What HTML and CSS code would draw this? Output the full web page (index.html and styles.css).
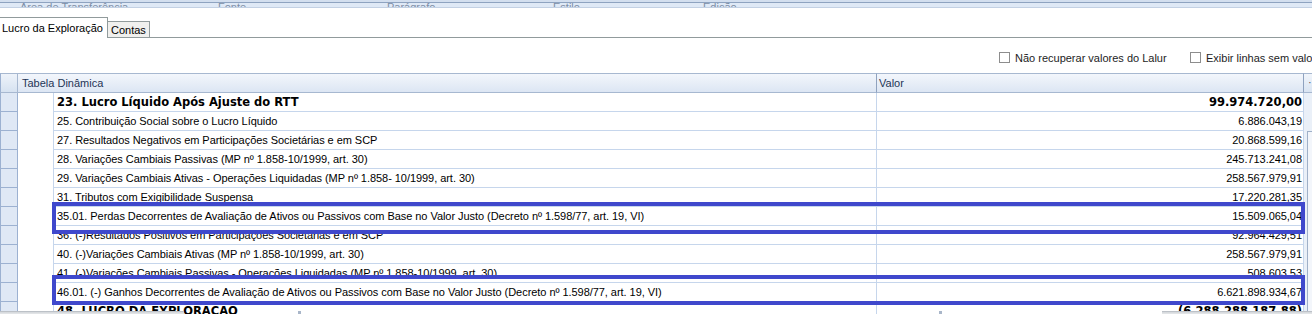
FILE: index.html
```html
<!DOCTYPE html>
<html lang="pt-BR">
<head>
<meta charset="utf-8">
<title>Lucro da Exploração</title>
<link rel="stylesheet" href="styles.css">
</head>
<body>
<div class="page">
  <div class="ribbon">
    <div class="ribbon-top"></div>
    <div class="ribbon-labels">
      <span class="rl rl1">Área de Transferência</span>
      <span class="rl rl2">Fonte</span>
      <span class="rl rl3">Parágrafo</span>
      <span class="rl rl4">Estilo</span>
      <span class="rl rl5">Edição</span>
    </div>
  </div>

  <div class="tabs">
    <div class="tab tab-active">Lucro da Exploração</div>
    <div class="tab tab-idle">Contas</div>
    <div class="tab-fill"></div>
  </div>

  <div class="options">
    <label class="opt opt-first"><span class="cb"></span>Não recuperar valores do Lalur</label>
    <label class="opt"><span class="cb"></span>Exibir linhas sem valor</label>
  </div>

  <div class="gridwrap">
    <div class="grid">
      <div class="row head">
        <div class="c ind"></div>
        <div class="c hlabel">Tabela Dinâmica</div>
        <div class="c hval">Valor</div>
      </div>
      <div class="row bold">
        <div class="c ind"></div><div class="c grp"></div>
        <div class="c lbl">23. Lucro Líquido Após Ajuste do RTT</div>
        <div class="c val">99.974.720,00</div>
      </div>
      <div class="row">
        <div class="c ind"></div><div class="c grp"></div>
        <div class="c lbl">25. Contribuição Social sobre o Lucro Líquido</div>
        <div class="c val">6.886.043,19</div>
      </div>
      <div class="row">
        <div class="c ind"></div><div class="c grp"></div>
        <div class="c lbl">27. Resultados Negativos em Participações Societárias e em SCP</div>
        <div class="c val">20.868.599,16</div>
      </div>
      <div class="row">
        <div class="c ind"></div><div class="c grp"></div>
        <div class="c lbl">28. Variações Cambiais Passivas (MP nº 1.858-10/1999, art. 30)</div>
        <div class="c val">245.713.241,08</div>
      </div>
      <div class="row">
        <div class="c ind"></div><div class="c grp"></div>
        <div class="c lbl">29. Variações Cambiais Ativas - Operações Liquidadas (MP nº 1.858- 10/1999, art. 30)</div>
        <div class="c val">258.567.979,91</div>
      </div>
      <div class="row">
        <div class="c ind"></div><div class="c grp"></div>
        <div class="c lbl">31. Tributos com Exigibilidade Suspensa</div>
        <div class="c val">17.220.281,35</div>
      </div>
      <div class="row">
        <div class="c ind"></div><div class="c grp"></div>
        <div class="c lbl">35.01. Perdas Decorrentes de Avaliação de Ativos ou Passivos com Base no Valor Justo (Decreto nº 1.598/77, art. 19, VI)</div>
        <div class="c val">15.509.065,04</div>
      </div>
      <div class="row">
        <div class="c ind"></div><div class="c grp"></div>
        <div class="c lbl">36. (-)Resultados Positivos em Participações Societárias e em SCP</div>
        <div class="c val">92.964.429,51</div>
      </div>
      <div class="row">
        <div class="c ind"></div><div class="c grp"></div>
        <div class="c lbl">40. (-)Variações Cambiais Ativas (MP nº 1.858-10/1999, art. 30)</div>
        <div class="c val">258.567.979,91</div>
      </div>
      <div class="row">
        <div class="c ind"></div><div class="c grp"></div>
        <div class="c lbl">41. (-)Variações Cambiais Passivas - Operações Liquidadas (MP nº 1.858-10/1999, art. 30)</div>
        <div class="c val">508.603,53</div>
      </div>
      <div class="row">
        <div class="c ind"></div><div class="c grp"></div>
        <div class="c lbl">46.01. (-) Ganhos Decorrentes de Avaliação de Ativos ou Passivos com Base no Valor Justo (Decreto nº 1.598/77, art. 19, VI)</div>
        <div class="c val">6.621.898.934,67</div>
      </div>
      <div class="row bold">
        <div class="c ind"></div><div class="c grp"></div>
        <div class="c lbl">48. LUCRO DA EXPLORAÇÃO</div>
        <div class="c val">(6.288.288.187,88)</div>
      </div>
    </div>
    <div class="vscroll">
      <div class="vscroll-head">·</div>
      <div class="vscroll-thumb"></div>
    </div>
  </div>

  <div class="hbar hbar-left"></div>
  <div class="hbar-tick tick1"></div>
  <div class="hbar-tick tick2"></div>
  <div class="hbar hbar-right"></div>

  <div class="mark mark1"></div>
  <div class="mark mark2"></div>
</div>
</body>
</html>
```

FILE: styles.css
```css
* { box-sizing: border-box; }

body {
  margin: 0;
  background: #ffffff;
  font-family: "Liberation Sans", Arial, sans-serif;
  font-size: 11px;
  color: #000;
}

.page {
  position: relative;
  width: 1312px;
  height: 314px;
  overflow: hidden;
  background: #fff;
}

/* ---------- ribbon remnant ---------- */
.ribbon {
  height: 8px;
  display: flex;
  flex-direction: column;
}
.ribbon-top {
  height: 3px;
  background: #d3dfef;
  border-bottom: 1px solid #8ea3c0;
}
.ribbon-labels {
  height: 5px;
  overflow: hidden;
  background: #dfe9f6;
  border-bottom: 1px solid #c3d1e4;
  display: flex;
  align-items: flex-end;
  white-space: nowrap;
}
.rl {
  display: block;
  flex: none;
  line-height: 11px;
  margin-bottom: -6px;
  color: #7d8ea6;
  font-size: 11px;
}
.rl1 { width: 218px; padding-left: 20px; }
.rl2 { width: 169px; }
.rl3 { width: 166px; }
.rl4 { width: 150px; }
.rl5 { width: 120px; }

/* ---------- tabs ---------- */
.tabs {
  margin-top: 9px;
  height: 21px;
  display: flex;
  align-items: flex-end;
}
.tab {
  flex: none;
  white-space: nowrap;
  color: #000;
}
.tab-active {
  width: 108px;
  height: 21px;
  padding: 4px 0 0 2px;
  background: #fff;
  border-top: 1px solid #919b9c;
  border-right: 1px solid #919b9c;
}
.tab-idle {
  width: 42px;
  height: 17px;
  padding: 2px 0 0 3px;
  background: #f0f0ee;
  border-top: 1px solid #919b9c;
  border-right: 1px solid #919b9c;
  border-bottom: 1px solid #919b9c;
}
.tab-fill {
  flex: 1;
  height: 0;
  border-bottom: 1px solid #919b9c;
}

/* ---------- options ---------- */
.options {
  height: 35px;
  padding-top: 4px;
  display: flex;
  align-items: center;
  padding-left: 999px;
  white-space: nowrap;
  color: #1d1d1d;
}
.opt {
  flex: none;
  display: flex;
  align-items: center;
}
.opt-first { width: 191px; }
.cb {
  width: 11px;
  height: 11px;
  border: 1px solid #8d8d8d;
  background: #fff;
  margin-right: 5px;
}

/* ---------- grid ---------- */
.gridwrap {
  display: flex;
  height: 241px;
}
.grid {
  width: 1304px;
  flex: none;
}
.row {
  display: grid;
  grid-template-columns: 18px 36px 823px 427px;
  height: 19px;
  letter-spacing: -0.05px;
}
.c {
  display: flex;
  align-items: center;
  white-space: nowrap;
  overflow: hidden;
}
.ind {
  background: #dfe8f5;
  border-left: 1px solid #9cb1d1;
  border-right: 1px solid #9cb1d1;
  border-bottom: 1px solid #9cb1d1;
}
.grp {
  background: #fff;
  border-right: 1px solid #c6d6ec;
}
.lbl {
  padding-left: 3px;
  border-right: 1px solid #c6d6ec;
  border-bottom: 1px solid #c6d6ec;
}
.val {
  justify-content: flex-end;
  padding-right: 1px;
  border-right: 1px solid #c6d6ec;
  border-bottom: 1px solid #c6d6ec;
}
.bold .c.lbl,
.bold .c.val {
  font-family: "DejaVu Sans", Verdana, sans-serif;
  font-weight: bold;
  font-size: 11.5px;
  letter-spacing: 0;
}

.row.head {
  height: 20px;
  grid-template-columns: 18px 859px 427px;
  background: linear-gradient(#f4f7fc, #dbe5f3);
  color: #1f3556;
  letter-spacing: 0;
}
.head .c {
  border-top: 1px solid #a7b8d0;
  border-bottom: 1px solid #a7b8d0;
}
.head .ind {
  background: linear-gradient(#eef3fa, #d6e2f1);
  border-right: 1px solid #a7b8d0;
}
.hlabel {
  padding-left: 4px;
  border-right: 1px solid #8fa2bf;
}
.hval {
  padding-left: 2px;
  border-right: 1px solid #8fa2bf;
}

/* ---------- vertical scrollbar ---------- */
.vscroll {
  flex: 1;
  display: flex;
  flex-direction: column;
  background: #eaf0f8;
}
.vscroll-head {
  height: 20px;
  padding-left: 4px;
  line-height: 16px;
  color: #555;
  background: linear-gradient(#f1f5fb, #d9e4f2);
  border-top: 1px solid #a7b8d0;
  border-bottom: 1px solid #a7b8d0;
}
.vscroll-thumb {
  margin-top: 38px;
  margin-left: 3px;
  flex: 1;
  background: #f3f6fb;
  border-left: 1px solid #9fb0c8;
  border-top: 1px solid #9fb0c8;
}

/* ---------- bottom scrollbar remnant (overlay) ---------- */
.hbar {
  position: absolute;
  top: 311px;
  height: 3px;
  background: linear-gradient(#d3d6da, #e6e8ea);
  border-top: 1px solid #bcc1c7;
}
.hbar-left { left: 0; width: 184px; }
.hbar-right { left: 1162px; width: 150px; }
.hbar-tick {
  position: absolute;
  top: 311px;
  width: 3px;
  height: 3px;
  background: #a9b6c9;
}
.tick1 { left: 298px; }
.tick2 { left: 939px; }

/* ---------- annotation boxes ---------- */
.mark {
  position: absolute;
  left: 52px;
  width: 1253px;
  border: 4px solid #3f48cc;
}
.mark1 { top: 202px; height: 32px; }
.mark2 { top: 275px; height: 30px; }
```
